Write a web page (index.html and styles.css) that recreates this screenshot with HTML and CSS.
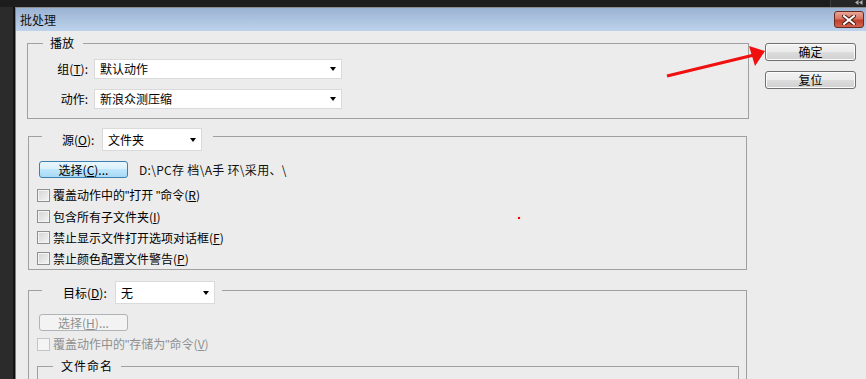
FILE: index.html
```html
<!DOCTYPE html>
<html lang="zh">
<head>
<meta charset="utf-8">
<title>批处理</title>
<link rel="stylesheet" href="styles.css">
</head>
<body>
<div class="topbar">
  <div class="tb-fill"></div>
  <div class="tb-tail">
    <svg class="tb-glyph" width="8" height="5" viewBox="0 0 8 5"><path d="M0 2.5 L3.5 0 V5 Z M4 2.5 L7.5 0 V5 Z" fill="#b0b0b0"/></svg>
  </div>
</div>
<div class="desk">
  <div class="leftstrip"></div>
  <div class="dialog">
    <div class="titlebar">
      <span class="title">批处理</span>
      <div class="close">
        <svg width="14" height="10" viewBox="0 0 14 10"><path d="M2 1 L12 9 M12 1 L2 9" stroke="#4a1a14" stroke-width="4" stroke-linecap="square"/><path d="M2 1 L12 9 M12 1 L2 9" stroke="#fff" stroke-width="2" stroke-linecap="square"/></svg>
      </div>
    </div>
    <div class="dlg-body">
      <div class="main">
        <div class="grp grp-play">
          <div class="legend legend-play">播放</div>
          <div class="field-row first">
            <span class="flabel">组(<u>T</u>):</span>
            <div class="select wide"><span class="sval">默认动作</span><span class="caret"></span></div>
          </div>
          <div class="field-row second">
            <span class="flabel">动作:</span>
            <div class="select wide"><span class="sval">新浪众测压缩</span><span class="caret"></span></div>
          </div>
        </div>

        <div class="grp grp-src">
          <div class="legend legend-src">
            <span class="llabel l-src">源(<u>O</u>):</span>
            <div class="select narrow"><span class="sval">文件夹</span><span class="caret"></span></div>
          </div>
          <div class="btn-row">
            <div class="pbtn blue">选择(<u>C</u>)...</div>
            <span class="path">D:\PC存 档\A手 环\采用、\</span>
          </div>
          <div class="cb-list">
            <div class="cb-row"><span class="cb"></span><span>覆盖动作中的<span class="q">"</span>打开 <span class="q">"</span>命令(<u>R</u>)</span></div>
            <div class="cb-row"><span class="cb"></span><span>包含所有子文件夹(<u>I</u>)</span></div>
            <div class="cb-row"><span class="cb"></span><span>禁止显示文件打开选项对话框(<u>F</u>)</span></div>
            <div class="cb-row"><span class="cb"></span><span>禁止颜色配置文件警告(<u>P</u>)</span></div>
          </div>
        </div>

        <div class="grp grp-dst">
          <div class="legend legend-dst">
            <span class="llabel l-dst">目标(<u>D</u>):</span>
            <div class="select narrow"><span class="sval">无</span><span class="caret"></span></div>
          </div>
          <div class="btn-row">
            <div class="pbtn disabled">选择(<u>H</u>)...</div>
          </div>
          <div class="cb-row dis-row"><span class="cb dis"></span><span>覆盖动作中的<span class="q">"</span>存储为<span class="q">"</span>命令(<u>V</u>)</span></div>
          <div class="grp grp-name">
            <div class="legend legend-name">文件命名</div>
          </div>
        </div>
      </div>
      <div class="side">
        <div class="btn">确定</div>
        <div class="btn second">复位</div>
      </div>
    </div>
  </div>
</div>
<svg class="arrow" width="866" height="379" viewBox="0 0 866 379">
  <line x1="667" y1="76" x2="754" y2="55" stroke="#f01010" stroke-width="3"/>
  <polygon points="765,51 749,46 755,66" fill="#f01010"/>
</svg>
<span class="dot"></span>
</body>
</html>
```

FILE: styles.css
```css
* { box-sizing: border-box; }
html, body { margin: 0; padding: 0; }
body {
  width: 866px;
  height: 379px;
  overflow: hidden;
  background: #222;
  font-family: "Noto Sans CJK SC", "Liberation Sans", sans-serif;
  font-size: 12px;
  color: #000;
  position: relative;
}
u { text-decoration: underline; text-underline-offset: 1px; }
.q { font-family: "Liberation Sans", sans-serif; }

.topbar { display: flex; height: 7px; background: #1d1d1d; }
.tb-fill { flex: 1; }
.tb-tail {
  width: 36px;
  border-left: 1px solid #3c3c3c;
  background: #262626;
  display: flex;
  justify-content: flex-end;
  align-items: flex-start;
}
.tb-glyph { display: block; margin-right: 3px; }

.desk { display: flex; height: 372px; overflow: hidden; }
.leftstrip { width: 15px; flex: none; background: #2b2b2b; border-right: 2px solid #121212; }
.dialog {
  flex: 1;
  background: #ececec;
  border-top: 1px solid #8d8d8d;
  border-left: 1px solid #7f7f7f;
  display: flex;
  flex-direction: column;
  overflow: hidden;
}
.titlebar {
  flex: none;
  height: 23px;
  background: linear-gradient(#9bb3d3, #bdd3ec);
  display: flex;
  align-items: center;
  padding-left: 4px;
}
.title { line-height: 16px; color: #111; }
.close {
  margin-left: auto;
  margin-right: 2px;
  align-self: flex-start;
  margin-top: 3px;
  width: 30px;
  height: 17px;
  border: 1px solid #6a2a22;
  border-radius: 3px;
  background: linear-gradient(#e9a797 0%, #d77462 45%, #c2402c 55%, #d0634e 100%);
  display: flex;
  align-items: center;
  justify-content: center;
}
.close svg { display: block; }

.dlg-body { flex: none; display: flex; align-items: flex-start; padding: 12px 0 0 12px; }
.main { width: 719px; flex: none; display: flex; flex-direction: column; }
.side { margin-left: 18px; display: flex; flex-direction: column; }

.grp { border: 1px solid #a0a0a0; flex: none; }
.legend {
  background: #ececec;
  width: fit-content;
  display: flex;
  align-items: center;
  white-space: nowrap;
}
.grp-play { margin: 0 -2px 0 -1px; padding-bottom: 9px; }
.legend-play { margin: -9px 0 0 15px; padding: 0 9px 0 7px; height: 16px; line-height: 16px; }

.field-row { display: flex; align-items: center; height: 20px; }
.field-row.first { margin-top: 8px; }
.field-row.second { margin-top: 10px; }
.flabel { width: 60px; text-align: right; margin-right: 6px; line-height: 16px; }

.select {
  background: #fff;
  border: 1px solid #dadada;
  display: flex;
  align-items: center;
  padding-left: 5px;
}
.select.wide { width: 248px; height: 20px; }
.select.narrow { width: 100px; height: 23px; }
.sval { line-height: 16px; }
.caret {
  margin-left: auto;
  margin-right: 5px;
  width: 0;
  height: 0;
  border-left: 3.5px solid transparent;
  border-right: 3.5px solid transparent;
  border-top: 4px solid #000;
}

.grp-src { margin-top: 17px; }
.legend-src { margin: -9px 0 0 13px; padding: 0 11px 0 20px; height: 23px; }
.llabel { line-height: 16px; margin-right: 5px; }
.l-src { width: 35px; }
.l-dst { width: 47px; }

.btn-row { display: flex; align-items: center; margin-top: 10px; padding-left: 10px; }
.pbtn {
  width: 89px;
  height: 17px;
  border-radius: 3px;
  text-align: center;
  line-height: 15px;
}
.pbtn.blue {
  border: 1px solid #3c7fb1;
  background: linear-gradient(#eaf6fd 0%, #d9f0fc 50%, #bee6fd 50%, #a7d9f5 100%);
}
.pbtn.disabled {
  border: 1px solid #b0b4b7;
  background: #f3f3f3;
  color: #8f8f8f;
}
.path { margin-left: 11px; line-height: 16px; color: #111; letter-spacing: 0.3px; }

.cb-list { margin-top: 7px; padding-left: 8px; }
.cb-row { display: flex; align-items: center; height: 21px; }
.cb-row > span:last-child { line-height: 16px; }
.cb {
  width: 13px;
  height: 13px;
  border: 1px solid #8e8f8f;
  background: linear-gradient(135deg, #d3d3d3, #f5f5f5);
  box-shadow: inset 0 0 0 1px #f4f4f4;
  margin-right: 3px;
  flex: none;
}
.cb.dis { border-color: #c5c5c5; background: #f4f4f4; box-shadow: none; }

.grp-dst { margin-top: 20px; height: 120px; }
.legend-dst { margin: -10px 0 0 13px; padding: 0 7px 0 21px; height: 23px; }
.dis-row { margin-top: 3px; padding-left: 8px; color: #8f8f8f; }

.grp-name { margin: 11px 7px 0 8px; height: 40px; }
.legend-name { margin: -9px 0 0 15px; padding: 0 8px; height: 16px; line-height: 16px; letter-spacing: 1px; }

.btn {
  width: 91px;
  height: 18px;
  border: 1px solid #707070;
  border-radius: 3px;
  background: linear-gradient(#f2f2f2 0%, #ebebeb 50%, #dddddd 50%, #d0d0d0 100%);
  box-shadow: inset 0 0 0 1px #fbfbfb;
  text-align: center;
  line-height: 16px;
}
.btn.second { margin-top: 10px; }

.arrow { position: absolute; left: 0; top: 0; pointer-events: none; }
.dot {
  position: absolute;
  left: 518px;
  top: 217px;
  width: 2px;
  height: 2px;
  background: #f00;
  box-shadow: 0 0 1px #f66;
}
```
